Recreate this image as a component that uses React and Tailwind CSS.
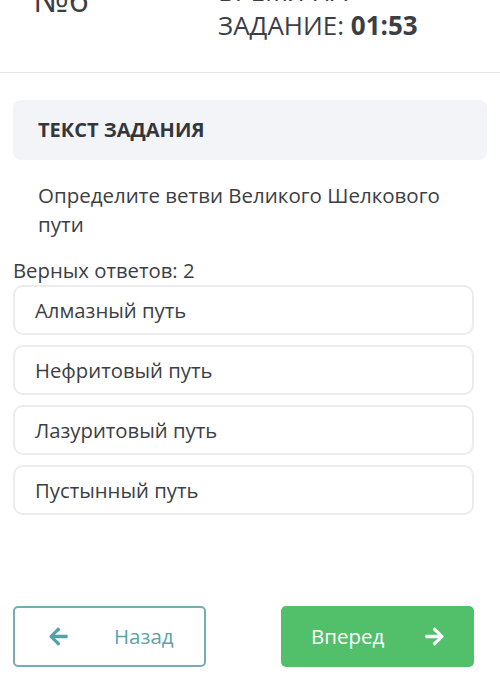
import React from 'react'
import { FaArrowLeft, FaArrowRight } from 'react-icons/fa'

const options = ['Алмазный путь', 'Нефритовый путь', 'Лазуритовый путь', 'Пустынный путь']

const App = () => {
  return (
    <div className="w-[500px] h-[677px] overflow-hidden bg-white text-[#3b3e44]" style={{ fontFamily: '"Open Sans", sans-serif' }}>
      <div className="h-[73px] border-b border-[#e4e5e8] overflow-hidden">
        <div className="flex -mt-[26px]">
          <div className="w-[218px] pl-[33px] pt-[5px] text-[35px] leading-[40px]">№6</div>
          <div className="text-[26px] leading-[34px]">
            <div>ВРЕМЯ НА</div>
            <div>
              ЗАДАНИЕ: <span className="font-bold">01:53</span>
            </div>
          </div>
        </div>
      </div>

      <div className="px-[13px] pt-[27px]">
        <div className="h-[60px] rounded-lg bg-[#f3f4f8] flex items-center pl-[25px]">
          <span className="text-[20px] font-bold text-[#33363b]">ТЕКСТ ЗАДАНИЯ</span>
        </div>

        <p className="mt-[21px] pl-[25px] pr-4 text-[20.5px] leading-[29px]">
          Определите ветви Великого Шелкового пути
        </p>

        <div className="mt-[17px] text-[20.3px] leading-[28px]">Верных ответов: 2</div>

        <div className="mt-[1px] flex flex-col gap-[10px] w-[461px]">
          {options.map((o) => (
            <div key={o} className="h-[50px] rounded-[10px] border-2 border-[#eaecee] flex items-center pl-[20px] text-[20.3px]">
              {o}
            </div>
          ))}
        </div>

        <div className="mt-[91px] flex justify-between w-[461px]">
          <button className="w-[193px] h-[61px] rounded-[5px] border-2 border-[#74aeb1] flex items-center pl-[33px] text-[#5fa2a6] text-[20.5px]">
            <FaArrowLeft className="w-[21px] h-[21px] text-[#4ea4a8]" />
            <span className="ml-[45px]">Назад</span>
          </button>
          <button className="w-[193px] h-[61px] rounded-[5px] bg-[#52bf6b] flex items-center pl-[30px] text-white text-[20.5px]">
            <span>Вперед</span>
            <FaArrowRight className="ml-[40px] w-[21px] h-[21px]" />
          </button>
        </div>
      </div>
    </div>
  )
}

export default App
